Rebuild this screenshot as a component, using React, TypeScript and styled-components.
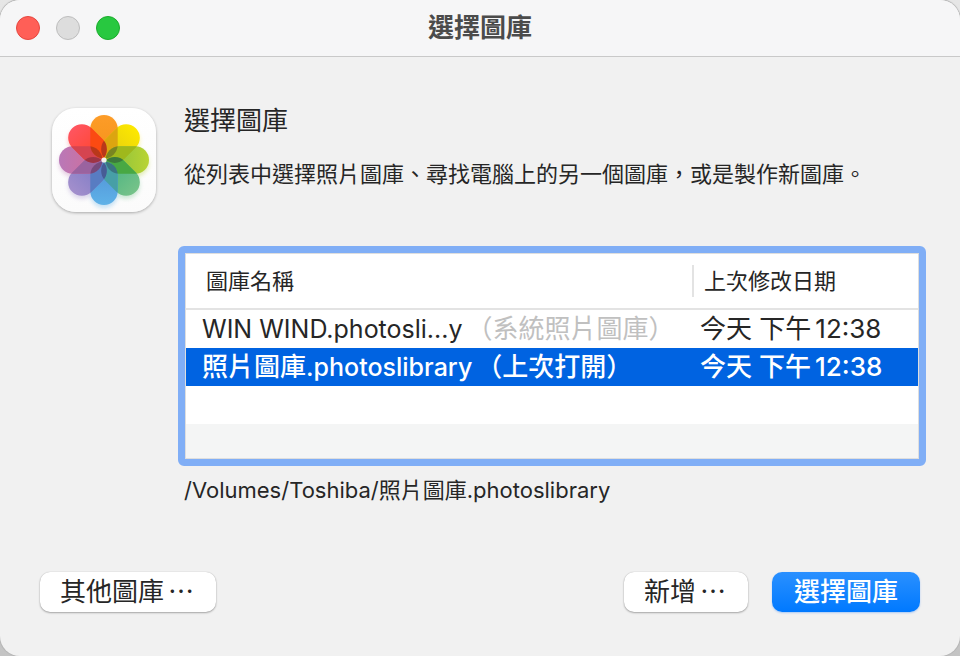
import React, { useState } from "react";
import styled, { createGlobalStyle, css } from "styled-components";

const GlobalStyle = createGlobalStyle`
  * { box-sizing: border-box; }
  body {
    margin: 0;
    background: linear-gradient(#e6e6e6, #c4c4c4);
    color: #262626;
    font-family: Inter, "Noto Sans CJK TC", sans-serif;
  }
  button { font: inherit; }
`;

const Window = styled.div`
  display: flex;
  flex-direction: column;
  min-height: 100vh;
  background: #f1f1f1;
  border-radius: 20px;
  box-shadow: 0 0 1px 1px #b4b4b4;
  overflow: hidden;
`;

const TitleBar = styled.header`
  display: grid;
  grid-template-columns: 1fr auto 1fr;
  align-items: center;
  height: 57px;
  padding: 0 16px;
  background: #f6f6f7;
  border-bottom: 1px solid #c9c9c9;
`;

const WindowTitle = styled.h1`
  margin: 0;
  font-size: 26px;
  line-height: 40px;
  font-weight: 700;
  color: #4b4b4b;
`;

const Lights = styled.div`
  display: flex;
  gap: 16px;
`;

const Light = styled.button<{ $fill: string; $edge: string }>`
  width: 24px;
  height: 24px;
  padding: 0;
  border: 1px solid ${(p) => p.$edge};
  border-radius: 50%;
  background: ${(p) => p.$fill};
`;

const Content = styled.main`
  display: grid;
  grid-template-columns: 104px minmax(0, 1fr);
  column-gap: 28px;
  padding: 44px 34px 0 52px;
`;

const AppIcon = styled.svg`
  width: 104px;
  height: 104px;
  margin-top: 7px;
  border-radius: 24px;
  background: linear-gradient(#ffffff, #fbfbfb);
  box-shadow: 0 1px 3px rgba(0, 0, 0, 0.3);
`;

const Heading = styled.h2`
  margin: 0;
  font-size: 26px;
  line-height: 40px;
  font-weight: 400;
`;

const Description = styled.p`
  margin: 14px 0 0;
  font-size: 22px;
  line-height: 34px;
  font-family: "Noto Sans CJK TC", sans-serif;
`;

const Intro = styled.div`
  min-width: 0;
`;

const Details = styled.section`
  grid-column: 2;
  margin: 34px 0 0 -6px;
`;

const ListFrame = styled.div`
  border: 7px solid #80aef6;
  border-radius: 6px;
  background: #ffffff;
`;

const Table = styled.table`
  width: 100%;
  table-layout: fixed;
  border-collapse: separate;
  border-spacing: 0;
  border: 1px solid #dedede;
`;

const NameCol = styled.col``;

const DateCol = styled.col`
  width: 226px;
`;

const HeadCell = styled.th<{ $divided?: boolean }>`
  height: 56px;
  padding: 0 0 0 ${(p) => (p.$divided ? "0" : "20px")};
  border-bottom: 2px solid #e3e3e3;
  font-size: 22px;
  line-height: 32px;
  font-weight: 400;
  text-align: left;
`;

const HeadLabel = styled.span<{ $divided?: boolean }>`
  display: block;
  ${(p) =>
    p.$divided &&
    css`
      padding-left: 10px;
      border-left: 2px solid #e3e3e3;
    `}
`;

const Row = styled.tr<{ $selected?: boolean }>`
  background: ${(p) => (p.$selected ? "#0063e1" : "#ffffff")};
  color: ${(p) => (p.$selected ? "#ffffff" : "#262626")};
  font-weight: ${(p) => (p.$selected ? 500 : 400)};
  cursor: default;
`;

const Cell = styled.td<{ $date?: boolean }>`
  height: 38px;
  padding: 0 0 0 ${(p) => (p.$date ? "8px" : "16px")};
  font-size: 26px;
  line-height: 36px;
  white-space: nowrap;
  overflow: hidden;
`;

const FileName = styled.span`
  font-size: 25px;
`;

const Time = styled.span`
  margin-left: 4px;
`;

const Note = styled.span<{ $muted: boolean }>`
  margin-left: 4px;
  color: ${(p) => (p.$muted ? "#c0c0c0" : "inherit")};
`;

const FillerCell = styled.td<{ $striped?: boolean }>`
  height: ${(p) => (p.$striped ? "34px" : "38px")};
  padding: 0;
  background: ${(p) => (p.$striped ? "#f4f5f5" : "#ffffff")};
`;

const Path = styled.p`
  margin: 8px 0 0 6px;
  font-size: 22px;
  line-height: 32px;
`;

const Footer = styled.footer`
  display: flex;
  gap: 24px;
  margin-top: auto;
  padding: 0 40px 44px;
`;

const PushButton = styled.button<{ $primary?: boolean; $leading?: boolean }>`
  height: 40px;
  padding: 0 22px 4px;
  margin-right: ${(p) => (p.$leading ? "auto" : "0")};
  border: 0;
  border-radius: 10px;
  background: #ffffff;
  color: #262626;
  font-family: "Noto Sans CJK TC", sans-serif;
  font-size: 26px;
  line-height: 36px;
  box-shadow: 0 1px 2px rgba(0, 0, 0, 0.3), 0 0 1px rgba(0, 0, 0, 0.25);
  ${(p) =>
    p.$primary
      ? css`
          background: linear-gradient(#2a90ff, #0079ff);
          color: #ffffff;
          font-weight: 500;
          box-shadow: 0 1px 2px rgba(0, 110, 255, 0.3);
        `
      : css`
          padding-left: 20px;
        `}
`;

const Dots = styled.span`
  margin-left: 4px;
`;

const petals = [
  { inner: "#f6951c", outer: "#fd9c28", overlap: "#dca510" },
  { inner: "#e6d010", outer: "#fde800", overlap: "#9fb81c" },
  { inner: "#8fc23c", outer: "#b9d433", overlap: "#48a843" },
  { inner: "#4db482", outer: "#76c389", overlap: "#479fa6" },
  { inner: "#5495d8", outer: "#5eb2e8", overlap: "#587cc2" },
  { inner: "#7f7cc6", outer: "#a38fcc", overlap: "#9a639f" },
  { inner: "#d06f9b", outer: "#b978b8", overlap: "#d54450" },
  { inner: "#ff4630", outer: "#ff5560", overlap: "#fb4a12" },
];

const turn = (i: number) => `rotate(${(i % 8) * 45} 52 52)`;
const petalShape = { x: 38.3, y: 7, width: 27.4, height: 43.4, rx: 13.7 };

function PhotosIcon() {
  return (
    <AppIcon viewBox="0 0 104 104" role="img" aria-label="照片">
      <defs>
        {petals.map((p, i) => (
          <React.Fragment key={i}>
            <linearGradient id={`petal${i}`} x1="0" y1="1" x2="0" y2="0">
              <stop offset="0.2" stopColor={p.inner} />
              <stop offset="1" stopColor={p.outer} />
            </linearGradient>
            <clipPath id={`clip${i}`}>
              <rect {...petalShape} transform={turn(i)} />
            </clipPath>
          </React.Fragment>
        ))}
        <filter id="glow" x="-30%" y="-30%" width="160%" height="160%">
          <feGaussianBlur stdDeviation="2" />
        </filter>
      </defs>
      <g filter="url(#glow)" opacity="0.35" transform="translate(0 3)">
        {petals.map((_, i) => (
          <rect key={i} {...petalShape} fill={`url(#petal${i})`} transform={turn(i)} />
        ))}
      </g>
      {petals.map((_, i) => (
        <rect key={i} {...petalShape} fill={`url(#petal${i})`} transform={turn(i)} />
      ))}
      {petals.map((p, i) => (
        <g key={i} clipPath={`url(#clip${i})`}>
          <rect {...petalShape} fill={p.overlap} transform={turn(i + 1)} />
        </g>
      ))}
      {petals.map((_, i) => (
        <g key={i} clipPath={`url(#clip${i})`}>
          <rect {...petalShape} fill="#201030" fillOpacity="0.3" transform={turn(i + 2)} />
        </g>
      ))}
      <circle cx="52" cy="52" r="2.6" fill="#f4f0ea" />
    </AppIcon>
  );
}

type Library = { name: string; file: string; note: string; muted: boolean };

const libraries: Library[] = [
  { name: "", file: "WIN WIND.photosli...y", note: "（系統照片圖庫）", muted: true },
  { name: "照片圖庫", file: ".photoslibrary", note: "（上次打開）", muted: false },
];

export default function App() {
  const [selected, setSelected] = useState(1);
  return (
    <>
      <GlobalStyle />
      <Window lang="zh-TW">
        <TitleBar>
          <Lights>
            <Light $fill="#ff5f57" $edge="#e5473f" aria-label="關閉" />
            <Light $fill="#dddddd" $edge="#bdbdbd" aria-label="縮到最小" disabled />
            <Light $fill="#28c840" $edge="#1bac2c" aria-label="縮放" />
          </Lights>
          <WindowTitle>選擇圖庫</WindowTitle>
        </TitleBar>
        <Content>
          <PhotosIcon />
          <Intro>
            <Heading>選擇圖庫</Heading>
            <Description>從列表中選擇照片圖庫、尋找電腦上的另一個圖庫，或是製作新圖庫。</Description>
          </Intro>
          <Details>
            <ListFrame>
              <Table>
                <colgroup>
                  <NameCol />
                  <DateCol />
                </colgroup>
                <thead>
                  <tr>
                    <HeadCell scope="col">
                      <HeadLabel>圖庫名稱</HeadLabel>
                    </HeadCell>
                    <HeadCell scope="col" $divided>
                      <HeadLabel $divided>上次修改日期</HeadLabel>
                    </HeadCell>
                  </tr>
                </thead>
                <tbody>
                  {libraries.map((lib, i) => (
                    <Row key={i} $selected={i === selected} aria-selected={i === selected} onClick={() => setSelected(i)}>
                      <Cell>
                        {lib.name}
                        <FileName>{lib.file}</FileName>
                        <Note $muted={lib.muted}>{lib.note}</Note>
                      </Cell>
                      <Cell $date>
                        今天 下午<Time>12:38</Time>
                      </Cell>
                    </Row>
                  ))}
                  <tr><FillerCell colSpan={2} /></tr>
                  <tr><FillerCell colSpan={2} $striped /></tr>
                </tbody>
              </Table>
            </ListFrame>
            <Path>/Volumes/Toshiba/照片圖庫.photoslibrary</Path>
          </Details>
        </Content>
        <Footer>
          <PushButton $leading>其他圖庫<Dots>⋯</Dots></PushButton>
          <PushButton>新增<Dots>⋯</Dots></PushButton>
          <PushButton $primary>選擇圖庫</PushButton>
        </Footer>
      </Window>
    </>
  );
}
